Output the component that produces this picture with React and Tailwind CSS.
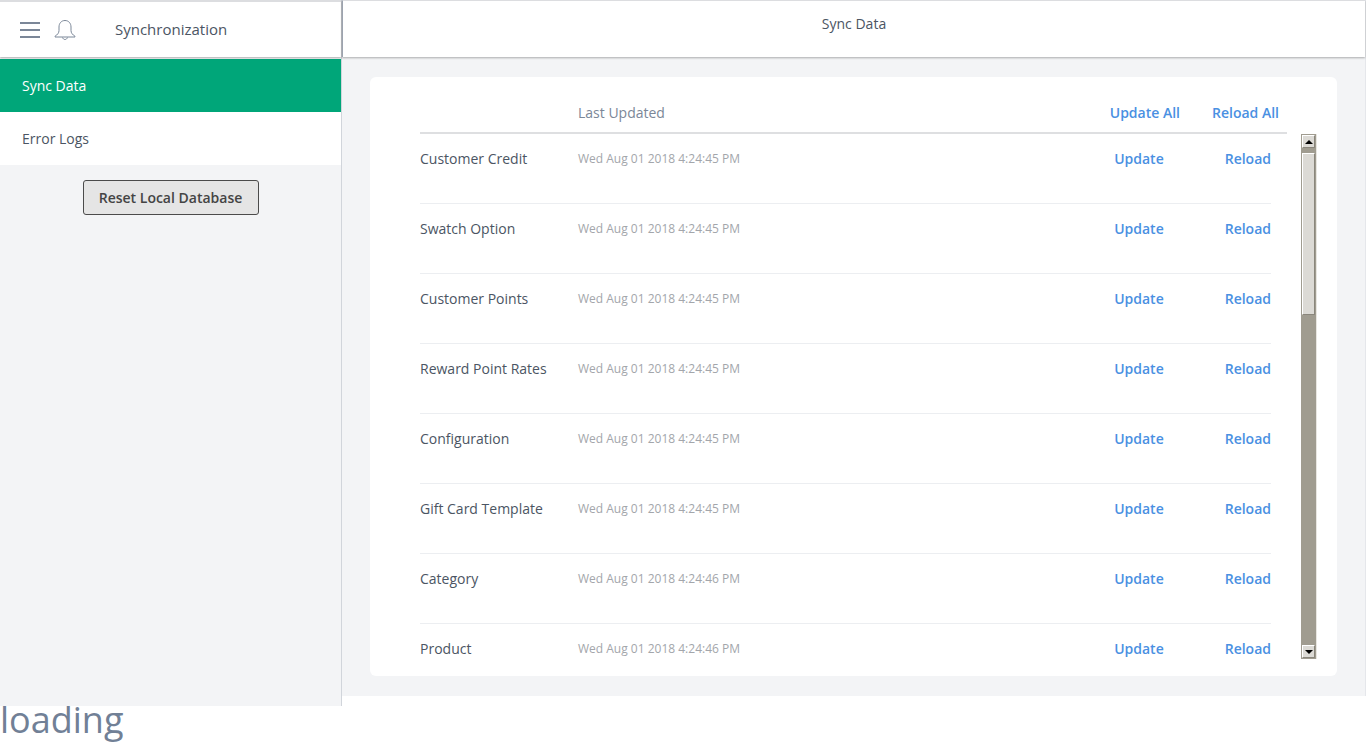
import React from 'react';

const rows = [
  ['Customer Credit', 'Wed Aug 01 2018 4:24:45 PM'],
  ['Swatch Option', 'Wed Aug 01 2018 4:24:45 PM'],
  ['Customer Points', 'Wed Aug 01 2018 4:24:45 PM'],
  ['Reward Point Rates', 'Wed Aug 01 2018 4:24:45 PM'],
  ['Configuration', 'Wed Aug 01 2018 4:24:45 PM'],
  ['Gift Card Template', 'Wed Aug 01 2018 4:24:45 PM'],
  ['Category', 'Wed Aug 01 2018 4:24:46 PM'],
  ['Product', 'Wed Aug 01 2018 4:24:46 PM'],
];

const Bell = () => (
  <svg width="24" height="22" viewBox="0 0 24 22" fill="none" stroke="#7b8798" strokeWidth="1" className="block">
    <path d="M12 1.5c-3.6 0-6 2.8-6 6.5v3.5c0 2.5-1.6 4.2-4 5.8v.7h20v-.7c-2.4-1.6-4-3.3-4-5.8V8c0-3.7-2.4-6.5-6-6.5z" />
    <path d="M9.5 18.5c.5 1.3 1.4 2 2.5 2s2-.7 2.5-2" />
  </svg>
);

const ScrollButton = ({ up }) => (
  <div className="w-[13px] h-[13px] bg-[#dcdad5] border-t border-l border-t-white border-l-white border-r border-b border-r-[#8a867c] border-b-[#8a867c] flex items-center justify-center">
    <div className={up
      ? 'w-0 h-0 border-l-[4px] border-r-[4px] border-b-[4px] border-l-transparent border-r-transparent border-b-black'
      : 'w-0 h-0 border-l-[4px] border-r-[4px] border-t-[4px] border-l-transparent border-r-transparent border-t-black'} />
  </div>
);

const Scrollbar = () => (
  <div className="w-[16px] h-[525px] bg-[#a09c90] border-r border-r-[#e8e6e1] pl-px pt-px pb-px flex flex-col justify-between">
    <div>
      <ScrollButton up />
      <div className="mt-[5px] w-[13px] h-[162px] bg-[#dcdad5] border-t border-l border-t-white border-l-white border-r border-b border-r-[#8a867c] border-b-[#8a867c]" />
    </div>
    <ScrollButton />
  </div>
);

export default function App() {
  return (
    <div className="w-[1366px] h-[742px] overflow-hidden bg-white font-['Open_Sans',sans-serif] text-[#374151]">
      <div className="flex h-[706px]">
        <aside className="w-[342px] shrink-0 bg-[#f3f4f6] border-r border-r-[#d1d5db] flex flex-col">
          <div className="h-[57px] bg-white border-t-2 border-t-[#dcdde0] shadow-[0_1px_2px_rgba(0,0,0,0.3)] flex items-center pl-5 mb-[2px] relative">
            <div className="w-[20px] flex flex-col gap-[5px]">
              <div className="h-[2px] bg-[#7b8798]" />
              <div className="h-[2px] bg-[#7b8798]" />
              <div className="h-[2px] bg-[#7b8798]" />
            </div>
            <div className="ml-[13px]"><Bell /></div>
            <span className="ml-[38px] text-[15px] text-[#4b5563]">Synchronization</span>
          </div>
          <div className="h-[53px] bg-[#00a679] text-white text-[14px] flex items-center pl-[22px]">Sync Data</div>
          <div className="h-[53px] bg-white text-[#4b5563] text-[14px] flex items-center pl-[22px]">Error Logs</div>
          <div className="flex justify-center pt-[15px]">
            <button className="w-[176px] h-[35px] bg-[#e5e5e5] border border-[#4b4b4b] rounded-[3px] text-[14px] font-semibold text-[#444]">Reset Local Database</button>
          </div>
        </aside>
        <main className="flex-1 min-w-0 h-[696px] bg-[#f3f4f6] flex flex-col border-r border-r-[#e5e7eb]">
          <div className="h-[57px] bg-white border-t border-t-[#dcdde0] border-l border-l-[#9ca3af] shadow-[0_1px_2px_rgba(0,0,0,0.3)] text-center text-[14px] text-[#4b5563] pt-[12px] relative">Sync Data</div>
          <div className="flex-1 min-h-0 pt-[20px] pb-[20px] pl-[28px] pr-[28px]">
            <section className="h-[599px] w-[967px] bg-white rounded-[6px] pl-[50px] flex flex-col overflow-hidden">
              <div className="w-[867px] h-[57px] shrink-0 border-b-2 border-b-[#dedfe1] flex items-center pt-[16px] pr-[8px]">
                <span className="w-[158px]" />
                <span className="flex-1 text-[14px] text-[#7b8798]">Last Updated</span>
                <span className="text-[14px] font-semibold text-[#4a90e2]">Update All</span>
                <span className="ml-[32px] text-[14px] font-semibold text-[#4a90e2]">Reload All</span>
              </div>
              <div className="flex flex-1 min-h-0">
                <div className="w-[851px] overflow-hidden">
                  {rows.map(([name, time]) => (
                    <div key={name} className="h-[70px] flex items-center pb-[20px] border-b border-b-[#eceef1] text-[14px]">
                      <span className="w-[158px] text-[#4b5563]">{name}</span>
                      <span className="flex-1 text-[12px] text-[#a3a6ab]">{time}</span>
                      <span className="font-semibold text-[#4a90e2]">Update</span>
                      <span className="ml-[61px] font-semibold text-[#4a90e2]">Reload</span>
                    </div>
                  ))}
                </div>
                <div className="ml-[30px]"><Scrollbar /></div>
              </div>
            </section>
          </div>
        </main>
      </div>
      <div className="text-[36px] leading-[28px] text-[#718096]">loading</div>
    </div>
  );
}
